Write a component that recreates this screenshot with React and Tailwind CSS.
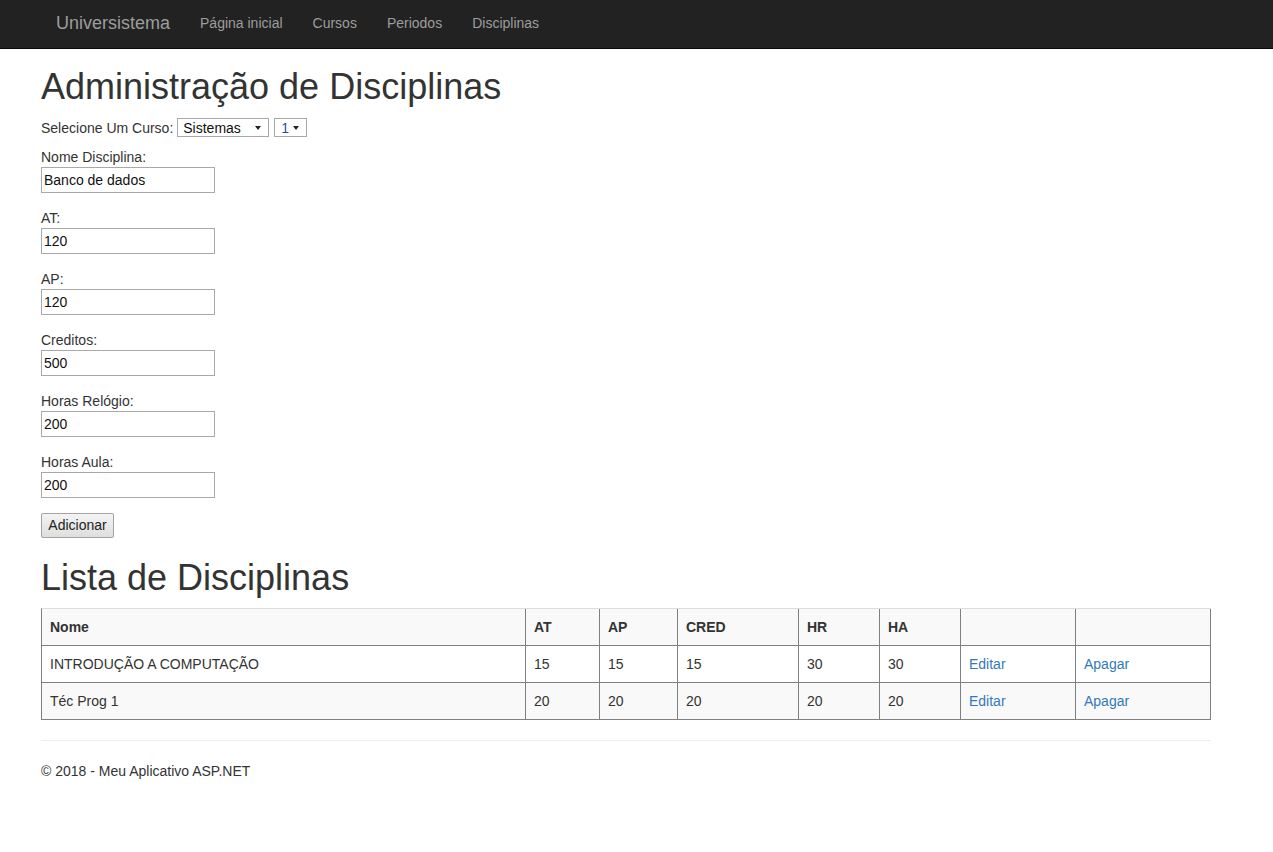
function Caret() {
  return (
    <svg width="6" height="4" viewBox="0 0 6 4" className="block">
      <path d="M0 0 L6 0 L3 4 Z" fill="#222" />
    </svg>
  );
}

function Field({ label, value, last }) {
  return (
    <div className={last ? "" : "mb-[15px]"}>
      <div className="h-[20px] leading-[20px]">{label}</div>
      <div className="w-[174px] h-[26px] border border-[#a9a9a9] bg-white flex items-center pl-[2px] text-[#111] leading-[20px]">
        {value}
      </div>
    </div>
  );
}

const rows = [
  ["INTRODUÇÃO A COMPUTAÇÃO", "15", "15", "15", "30", "30"],
  ["Téc Prog 1", "20", "20", "20", "20", "20"],
];

function Cell({ children, striped, className = "" }) {
  return (
    <div
      className={
        "h-[37px] px-[8px] pt-[8px] border-r border-b border-[#808080] " +
        (striped ? "bg-[#f9f9f9] " : "bg-white ") +
        className
      }
    >
      {children}
    </div>
  );
}

export default function App() {
  return (
    <div className="min-h-[852px] bg-white text-[#333] text-[14px] leading-[20px] font-['Liberation_Sans',Arial,Helvetica,sans-serif]">
      <nav className="h-[49px] bg-[#222] border-b border-[#080808]">
        <div className="h-[48px] pb-[2px] pl-[41px] flex items-center">
          <span className="px-[15px] text-[18px] leading-[20px] text-[#9d9d9d]">Universistema</span>
          <span className="px-[15px] text-[#9d9d9d]">Página inicial</span>
          <span className="px-[15px] text-[#9d9d9d]">Cursos</span>
          <span className="px-[15px] text-[#9d9d9d]">Periodos</span>
          <span className="px-[15px] text-[#9d9d9d]">Disciplinas</span>
        </div>
      </nav>

      <main className="ml-[41px] w-[1170px]">
        <h1 className="mt-[18px] mb-[11px] text-[36px] leading-[39.6px] font-normal text-[#333]">
          Administração de Disciplinas
        </h1>

        <div className="h-[20px] flex items-center">
          <span>Selecione Um Curso:</span>
          <div className="ml-[4px] w-[92px] h-[19px] border border-[#a9a9a9] bg-white flex items-center justify-between pl-[5px] pr-[7px] text-[#111]">
            <span>Sistemas</span>
            <Caret />
          </div>
          <div className="ml-[5px] w-[33px] h-[19px] border border-[#a9a9a9] bg-white flex items-center pl-[6px] text-[#1a4f9c]">
            <span>1</span>
            <span className="ml-[4px]">
              <Caret />
            </span>
          </div>
        </div>

        <div className="mt-[9px]">
          <Field label="Nome Disciplina:" value="Banco de dados" />
          <Field label="AT:" value="120" />
          <Field label="AP:" value="120" />
          <Field label="Creditos:" value="500" />
          <Field label="Horas Relógio:" value="200" />
          <Field label="Horas Aula:" value="200" last />
        </div>

        <button className="mt-[15px] w-[73px] h-[25px] border border-[#a3a3a3] rounded-[2px] bg-gradient-to-b from-[#f4f4f4] to-[#dedede] text-[#222] text-[14px] leading-[20px] flex items-center justify-center">
          Adicionar
        </button>

        <h1 className="mt-[20px] mb-[11px] text-[36px] leading-[39.6px] font-normal text-[#333]">
          Lista de Disciplinas
        </h1>

        <div className="grid grid-cols-[484px_74px_78px_121px_81px_81px_115px_135px] border-l border-t border-l-[#808080] border-t-[#dddddd]">
          {["Nome", "AT", "AP", "CRED", "HR", "HA", "", ""].map((h, i) => (
            <Cell key={"h" + i} striped className="font-bold">
              {h}
            </Cell>
          ))}
          {rows.map((r, ri) => [
            ...r.map((c, ci) => (
              <Cell key={ri + "-" + ci} striped={ri === 1}>
                {c}
              </Cell>
            )),
            <Cell key={ri + "-e"} striped={ri === 1} className="text-[#337ab7]">
              Editar
            </Cell>,
            <Cell key={ri + "-a"} striped={ri === 1} className="text-[#337ab7]">
              Apagar
            </Cell>,
          ])}
        </div>

        <hr className="mt-[20px] mb-[20px] border-0 border-t border-[#eeeeee]" />
        <footer>
          <p>© 2018 - Meu Aplicativo ASP.NET</p>
        </footer>
      </main>
    </div>
  );
}
